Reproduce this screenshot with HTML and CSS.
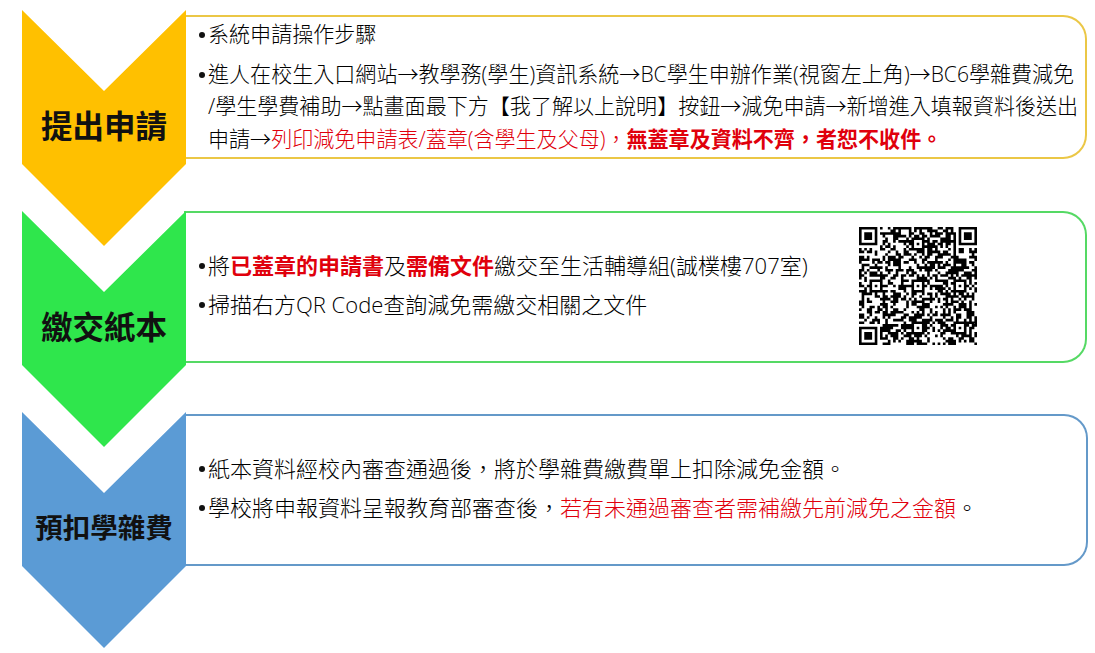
FILE: index.html
```html
<!DOCTYPE html>
<html lang="zh-Hant">
<head>
<meta charset="utf-8">
<title>學雜費減免申請流程</title>
<link rel="stylesheet" href="styles.css">
</head>
<body>
<main class="flow">
  <section class="step step-yellow">
    <div class="chevron"><h2 class="label">提出申請</h2></div>
    <div class="panel panel-short">
      <ul class="list list-tight">
        <li>系統申請操作步驟</li>
        <li>進人在校生入口網站→教學務(學生)資訊系統→BC學生申辦作業(視窗左上角)→BC6學雜費減免<br>/學生學費補助→點畫面最下方【我了解以上說明】按鈕→減免申請→新增進入填報資料後送出<br>申請→<span class="red">列印減免申請表/蓋章(含學生及父母)，</span><strong class="red">無蓋章及資料不齊，者恕不收件。</strong></li>
      </ul>
    </div>
  </section>
  <section class="step step-green">
    <div class="chevron"><h2 class="label">繳交紙本</h2></div>
    <div class="panel">
      <ul class="list">
        <li>將<strong class="red">已蓋章的申請書</strong>及<strong class="red">需備文件</strong>繳交至生活輔導組(誠樸樓707室)</li>
        <li>掃描右方QR Code查詢減免需繳交相關之文件</li>
      </ul>
      <svg class="qr" id="qr" viewBox="0 0 45 45" role="img" aria-label="QR Code"><path id="qr-path" d=""/></svg>
    </div>
  </section>
  <section class="step step-blue">
    <div class="chevron"><h2 class="label label-small">預扣學雜費</h2></div>
    <div class="panel panel-low">
      <ul class="list">
        <li>紙本資料經校內審查通過後，將於學雜費繳費單上扣除減免金額。</li>
        <li>學校將申報資料呈報教育部審查後，<span class="red">若有未通過審查者需補繳先前減免之金額</span>。</li>
      </ul>
    </div>
  </section>
</main>
<script src="qr.js"></script>
</body>
</html>
```
FILE: styles.css
```css
* { box-sizing: border-box; }
html, body { margin: 0; height: 100%; background: #fff; }
body {
  overflow: hidden;
  color: #000;
  font-family: "Open Sans", "Noto Sans CJK TC", sans-serif;
}
.flow { padding: 10px 8px 0 22px; }
.step { display: flex; height: 236px; margin-bottom: -35px; }
.chevron {
  flex: none;
  width: 164px;
  height: 236px;
  display: flex;
  align-items: center;
  justify-content: center;
  clip-path: polygon(0 0, 50% 81px, 100% 0, 100% 154px, 50% 100%, 0 154px);
}
.label {
  margin: 0 0 4px;
  font-size: 31.5px;
  font-weight: 700;
  line-height: 1;
  color: #111;
  white-space: nowrap;
}
.label-small { font-size: 27.5px; }
.panel {
  flex: 1;
  height: 152px;
  display: flex;
  align-items: center;
  justify-content: space-between;
  padding: 0 108px 0 15px;
  margin-left: -2px;
  border: 2px solid;
  border-left: 0;
  border-radius: 0 24px 24px 0;
}
.panel-short { height: 144px; margin-top: 5px; padding-right: 0; }
.panel-low { margin-top: 2px; }
.list { margin: 0 0 5px; padding: 0; list-style: none; font-size: 22px; font-weight: 300; line-height: 32.5px; white-space: nowrap; }
.list-tight { margin: 0 0 1px; font-size: 21.05px; }
.list li { position: relative; padding-left: 9px; margin-bottom: 7px; }
.list li:last-child { margin-bottom: 0; }
.list li::before {
  content: "";
  position: absolute;
  left: 0;
  top: 14px;
  width: 6px;
  height: 6px;
  border-radius: 50%;
  background: #111;
}
.red { color: #e0000c; }
strong.red { font-weight: 700; }
.qr { flex: none; width: 118px; height: 118px; margin-bottom: 2px; }
.qr path { fill: #000; }
.step-yellow .chevron { background: #ffc000; }
.step-yellow .panel { border-color: #ebc746; }
.step-green .chevron { background: #2fe64c; }
.step-green .panel { border-color: #55d964; }
.step-blue .chevron { background: #5b9bd5; }
.step-blue .panel { border-color: #6499c9; }
```
FILE: qr.js
```js
(function () {
  var size = 45, grid = [], seed = 0x5a3c17, x, y;
  function bit() {
    seed ^= seed << 13; seed ^= seed >>> 17; seed ^= seed << 5;
    return (seed >>> 7) & 1;
  }
  for (y = 0; y < size; y++) {
    grid[y] = [];
    for (x = 0; x < size; x++) grid[y][x] = bit();
  }
  function square(cx, cy, r, on) {
    for (var j = cy - r; j <= cy + r; j++) {
      for (var i = cx - r; i <= cx + r; i++) {
        if (grid[j] && i >= 0 && i < size) grid[j][i] = on;
      }
    }
  }
  [[3, 3], [41, 3], [3, 41]].forEach(function (c) {
    square(c[0], c[1], 4, 0);
    square(c[0], c[1], 3, 1);
    square(c[0], c[1], 2, 0);
    square(c[0], c[1], 1, 1);
  });
  [[22, 6], [6, 22], [22, 22], [38, 22], [22, 38], [38, 38]].forEach(function (c) {
    square(c[0], c[1], 2, 1);
    square(c[0], c[1], 1, 0);
    square(c[0], c[1], 0, 1);
  });
  var d = "";
  for (y = 0; y < size; y++) {
    for (x = 0; x < size; x++) {
      if (grid[y][x]) d += "M" + x + " " + y + "h1v1h-1z";
    }
  }
  document.getElementById("qr-path").setAttribute("d", d);
})();
```
